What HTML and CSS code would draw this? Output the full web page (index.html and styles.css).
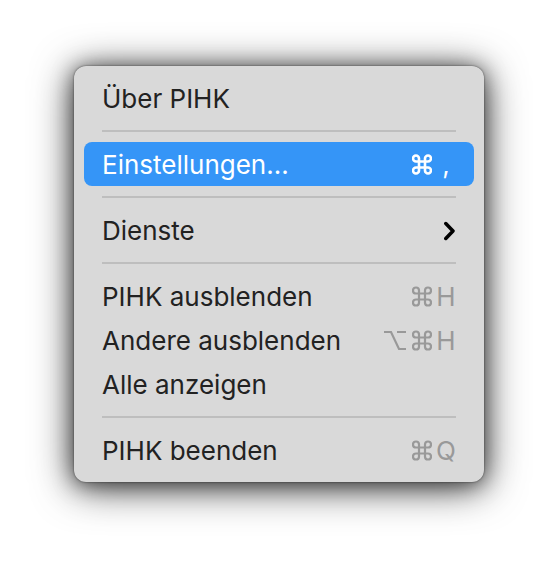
FILE: index.html
```html
<!DOCTYPE html>
<html lang="de">
<head>
<meta charset="utf-8">
<meta name="viewport" content="width=device-width, initial-scale=1">
<title>PIHK</title>
<link rel="stylesheet" href="styles.css">
</head>
<body>
<svg class="sprite" aria-hidden="true">
  <symbol id="command" viewBox="0 0 20 22">
    <path d="M7 7.500V4.400A3 3 0 1 0 4 7.500H16A3 3 0 1 0 13 4.400V16.600A3 3 0 1 0 16 13.500H4A3 3 0 1 0 7 16.600Z"/>
  </symbol>
  <symbol id="option" viewBox="0 0 22 22">
    <path d="M0 2H7L15 19H22M13 2H22"/>
  </symbol>
</svg>
<div class="menu" role="menu">
  <button class="item" type="button" role="menuitem"><span>Über PIHK</span></button>
  <hr class="separator">
  <button class="item item-active" type="button" role="menuitem"><span>Einstellungen...</span><kbd class="shortcut"><svg class="command"><use href="#command"/></svg><span class="key">,</span></kbd></button>
  <hr class="separator">
  <button class="item" type="button" role="menuitem" aria-haspopup="menu"><span>Dienste</span><svg class="chevron" viewBox="0 0 12 20" aria-hidden="true"><path d="M1.800 2.500 9 10 1.800 17.500"/></svg></button>
  <hr class="separator">
  <button class="item" type="button" role="menuitem"><span>PIHK ausblenden</span><kbd class="shortcut"><svg class="command"><use href="#command"/></svg><span class="key">H</span></kbd></button>
  <button class="item" type="button" role="menuitem"><span>Andere ausblenden</span><kbd class="shortcut"><svg class="option"><use href="#option"/></svg><svg class="command"><use href="#command"/></svg><span class="key">H</span></kbd></button>
  <button class="item" type="button" role="menuitem"><span>Alle anzeigen</span></button>
  <hr class="separator">
  <button class="item" type="button" role="menuitem"><span>PIHK beenden</span><kbd class="shortcut"><svg class="command"><use href="#command"/></svg><span class="key">Q</span></kbd></button>
</div>
</body>
</html>
```
FILE: styles.css
```css
body {
  margin: 0;
  padding: 66px 74px;
  background: #fff;
  font-family: Inter, "Liberation Sans", sans-serif;
}

.sprite {
  display: none;
}

.menu {
  padding: 10px;
  border-radius: 12px;
  background: #d9d9d9;
  box-shadow:
    0 0 2px rgba(0, 0, 0, 0.6),
    0 2px 20px rgba(0, 0, 0, 0.5),
    0 5px 40px rgba(0, 0, 0, 0.75);
}

.item {
  display: flex;
  align-items: center;
  justify-content: space-between;
  width: 100%;
  height: 44px;
  padding: 2px 18px 0;
  border: 0;
  border-radius: 8px;
  background: none;
  color: #222;
  font: inherit;
  font-size: 26px;
  line-height: 42px;
  text-align: left;
}

.item-active {
  background: #3595f7;
  color: #fff;
}

.separator {
  height: 2px;
  margin: 10px 18px;
  border: 0;
  background: #bebebe;
}

.shortcut {
  display: flex;
  align-items: center;
  gap: 4px;
  color: #999;
  font: inherit;
}

.item-active .shortcut {
  color: #fff;
}

.command,
.option {
  height: 22px;
  fill: none;
  stroke: currentColor;
  stroke-width: 2.2;
}

.command {
  width: 20px;
}

.option {
  width: 22px;
  margin-right: 2px;
}

.item-active .command {
  stroke-width: 2.6;
}

.key {
  min-width: 20px;
  text-align: center;
}

.chevron {
  width: 12px;
  height: 20px;
  fill: none;
  stroke: #000;
  stroke-width: 3.500;
  stroke-linecap: round;
  stroke-linejoin: round;
}
```
